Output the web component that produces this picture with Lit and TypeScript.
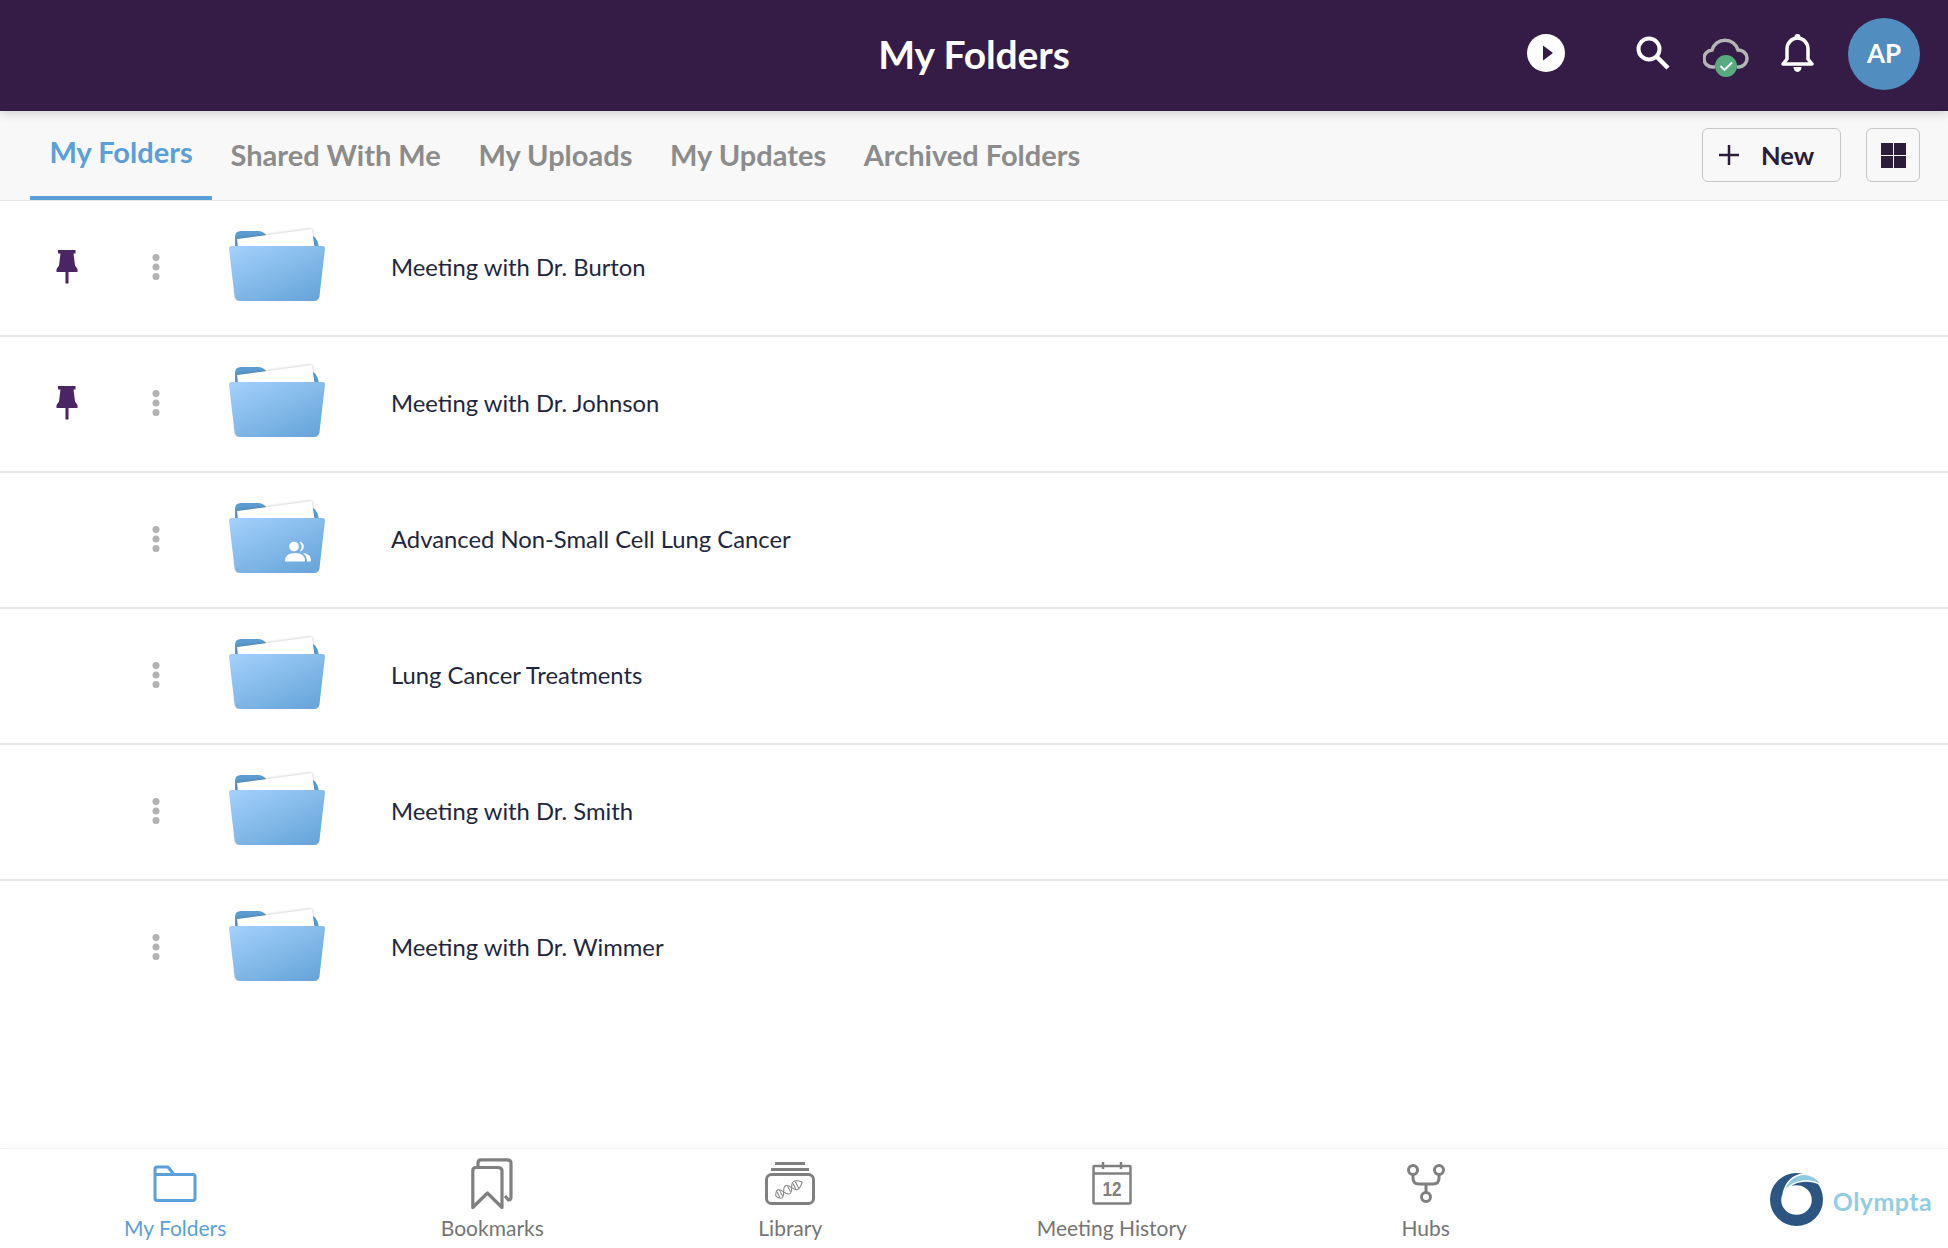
import { LitElement, html, css, svg } from "lit";
import { customElement } from "lit/decorators.js";

const folder = (shared: boolean) => html`<svg class="folder" width="100" height="78" viewBox="-2 -2 100 78">
  <defs>
    <linearGradient id="fg" x1="0.05" y1="0" x2="0.85" y2="1"><stop offset="0" stop-color="#a3d0fb"/><stop offset="1" stop-color="#67a5da"/></linearGradient>
    <filter id="ps" x="-20%" y="-30%" width="140%" height="160%"><feGaussianBlur stdDeviation="1.800"/></filter>
  </defs>
  <path d="M6 23V8Q6 2 12 2H29Q34 2 38 7L84 7Q90 10 90 23Z" fill="#5b9bd0"/>
  <path d="M8 10L83 0L85 18H9Z" fill="#000" opacity=".28" filter="url(#ps)"/>
  <path d="M8 10L83 0L85.500 18H9Z" fill="#fff"/>
  <path d="M2 17H94Q96 17 96 19.500L90.500 67Q90 72 85 72H11Q6 72 5.500 67L0 19.500Q0 17 2 17Z" fill="url(#fg)"/>
  ${shared ? svg`<g fill="#fff">
    <circle cx="65" cy="45.500" r="4.800"/><path d="M56 60Q56 52 66 52Q76 52 76 60Q76 60.500 75 60.500H57Q56 60.500 56 60Z"/>
    <path d="M71 41A4.800 4.800 0 0 1 71.500 50A6.500 6.500 0 0 0 71 41Z" stroke="#fff"/>
    <path d="M74 52Q82 53 82 59Q82 60.500 81 60.500H78Q78 55 74 52Z"/></g>` : ""}
</svg>`;

const pin = html`<svg width="22" height="34" viewBox="0 0 22 34"><path d="M2 0H19.500V3.500H17.500L19 15.500L21.500 19V22H12.500V33.500H9.500V22H0.500V19L3 15.500L4.500 3.500H2Z" fill="#4b2463"/></svg>`;
const dots = html`<svg width="8" height="26" viewBox="0 0 8 26"><g fill="#b3b3b3"><circle cx="4" cy="3.500" r="3.500"/><circle cx="4" cy="13" r="3.500"/><circle cx="4" cy="22.500" r="3.500"/></g></svg>`;

const rows = [
  { name: "Meeting with Dr. Burton", pinned: true },
  { name: "Meeting with Dr. Johnson", pinned: true },
  { name: "Advanced Non-Small Cell Lung Cancer", shared: true },
  { name: "Lung Cancer Treatments" },
  { name: "Meeting with Dr. Smith" },
  { name: "Meeting with Dr. Wimmer" },
];

const tabs = ["My Folders", "Shared With Me", "My Uploads", "My Updates", "Archived Folders"];

const navIcons = {
  folder: html`<svg width="44" height="37" viewBox="0 0 44 37" fill="none" stroke="#5ba0da" stroke-width="3" stroke-linejoin="round"><path d="M2 4Q2 2 4 2H15L21 9.500H40Q42 9.500 42 11.500V33Q42 35.500 40 35.500H4Q2 35.500 2 33Z"/><path d="M2 9.500H21"/></svg>`,
  bookmark: html`<svg width="42" height="51" viewBox="0 0 42 51" fill="none" stroke="#808080" stroke-width="3.200" stroke-linejoin="round"><path d="M7 9V5Q7 1.800 10 1.800H36Q40 1.800 40 5V39Q40 42 37.500 42L34 38"/><path d="M1.800 49.500V13Q1.800 9.500 5 9.500H27Q31 9.500 31 13V49.500L16.400 35Z"/></svg>`,
  library: html`<svg width="50" height="43" viewBox="0 0 50 43" fill="none" stroke="#808080"><path d="M10 1.500H40" stroke-width="3"/><path d="M6 7.500H44" stroke-width="3"/><rect x="1.500" y="12.500" width="47" height="29" rx="5" stroke-width="3"/><g stroke-width="1" transform="rotate(-28 24 27)"><path d="M9 27C12 21 15 21 18 27S24 33 27 27S33 21 39 27"/><path d="M9 27C12 33 15 33 18 27S24 21 27 27S33 33 39 27"/><path d="M12 24V30M15 23.500V30.500M24 24V30M30 24V30M33 23.500V30.500"/></g></svg>`,
  calendar: html`<svg width="40" height="44" viewBox="0 0 40 44" fill="none" stroke="#808080" stroke-width="2.500"><rect x="1.500" y="5" width="37" height="37.500" rx="1"/><path d="M1.500 12.500H38.500" /><path d="M11 1V8M29 1V8"/><text x="20" y="35" text-anchor="middle" class="cal" textLength="19" lengthAdjust="spacingAndGlyphs">12</text></svg>`,
  hubs: html`<svg width="40" height="39" viewBox="0 0 40 39" fill="none" stroke="#808080" stroke-width="3"><circle cx="7" cy="6" r="4.500"/><circle cx="33" cy="6" r="4.500"/><circle cx="20" cy="33" r="4.500"/><path d="M7 10.500V14Q7 20 13 20H27Q33 20 33 14V10.500M20 20V28.500"/></svg>`,
};

const nav = [
  { label: "My Folders", icon: navIcons.folder, active: true },
  { label: "Bookmarks", icon: navIcons.bookmark },
  { label: "Library", icon: navIcons.library },
  { label: "Meeting History", icon: navIcons.calendar },
  { label: "Hubs", icon: navIcons.hubs },
];

@customElement("app-root")
export class AppRoot extends LitElement {
  static styles = css`
    :host { display: flex; flex-direction: column; height: 1248px; overflow: hidden; background: #fff; font-family: Lato, "Noto Sans", sans-serif; }
    .header { flex: none; height: 111px; box-sizing: border-box; padding: 0 28px; background: #351c47; display: flex; align-items: center; box-shadow: 0 2px 10px rgba(0,0,0,.18); position: relative; z-index: 2; }
    .side { flex: 1 1 0; }
    .title { color: #fff; font-size: 39px; font-weight: 700; letter-spacing: -0.1px; padding-bottom: 3px; }
    .hicons { display: flex; justify-content: flex-end; align-items: center; height: 108px; margin-bottom: 3px; }
    .hicons svg { display: block; }
    .play { margin-right: 71px; margin-bottom: 2px; }
    .search { margin-right: 33px; margin-bottom: 3px; }
    .cloud { margin-right: 32px; margin-top: 6px; }
    .bell { margin-right: 34px; margin-bottom: 2px; }
    .avatar { width: 72px; height: 72px; border-radius: 50%; background: #528dbf; color: #fff; font-weight: 700; font-size: 26px; display: flex; align-items: center; justify-content: center; padding-bottom: 2px; box-sizing: border-box; }
    .tabs { flex: none; height: 90px; box-sizing: border-box; background: #f8f8f8; border-bottom: 1px solid #e6e6e6; display: flex; align-items: stretch; padding: 0 28px 0 30px; }
    .tab { padding: 1px 18.800px 0; box-sizing: border-box; font-size: 29px; font-weight: 700; color: #8c8c8c; display: flex; align-items: center; border-bottom: 4px solid transparent; }
    .tab.active { color: #5b9fd8; border-bottom-color: #5b9fd8; padding: 0 19px 4px 19.500px; }
    .spacer { flex: 1; }
    .actions { display: flex; align-items: center; gap: 25px; padding-bottom: 1px; }
    .btn { height: 54px; box-sizing: border-box; border: 1.500px solid #c6c6c6; border-radius: 6px; background: #f8f8f8; display: flex; align-items: center; justify-content: center; color: #2b1c3b; }
    .new { width: 139px; font-size: 25.500px; font-weight: 700; gap: 22px; justify-content: flex-start; padding-left: 16px; }
    .grid { width: 54px; }
    .list { flex: 1; }
    .row { height: 136px; box-sizing: border-box; border-bottom: 2px solid #e4e4e4; display: flex; align-items: center; }
    .row:last-child { border-bottom-color: transparent; }
    .row svg { display: block; }
    .pin { width: 67px; padding-left: 56px; box-sizing: content-box; height: 34px; flex: none; margin-top: -3px; }
    .more { width: 8px; margin-left: 29px; flex: none; margin-top: -2px; }
    .folder { margin-left: 67px; flex: none; margin-top: -4px; }
    .name { margin-left: 64px; font-size: 23.800px; color: #1f2740; margin-top: -2px; }
    .nav { flex: none; height: 100px; box-sizing: border-box; border-top: 1px solid #f2f2f2; box-shadow: 0 -4px 6px rgba(0,0,0,.02); display: flex; padding-left: 124px; gap: 214.500px; position: relative; }
    .item { height: 99px; display: flex; flex-direction: column; align-items: center; font-size: 21px; color: #757575; }
    .item.active { color: #5ba0da; }
    .ico { height: 63px; display: flex; align-items: center; justify-content: center; padding-top: 5px; box-sizing: border-box; }
    .ico svg { display: block; }
    .cal { font: 700 20px "Liberation Sans", sans-serif; fill: #808080; stroke: none; }
    .label { line-height: 26px; margin-top: 3px; white-space: nowrap; }
    .logo { margin-left: auto; margin-right: 16px; display: flex; align-items: center; gap: 10px; align-self: center; margin-top: 2px; }
    .logo svg { display: block; }
    .logot { font-size: 25px; font-weight: 700; color: #93cde2; letter-spacing: 0.4px; padding-top: 2px; }
  `;

  render() {
    return html`
      <div class="header">
        <div class="side"></div>
        <div class="title">My Folders</div>
        <div class="side hicons">
          <svg class="play" width="38" height="38" viewBox="0 0 38 38"><circle cx="19" cy="19" r="19" fill="#fff"/><path d="M16 11.500L26 19L16 26.500Z" fill="#351c47"/></svg>
          <svg class="search" width="34" height="34" viewBox="0 0 34 34" fill="none" stroke="#fff"><circle cx="13" cy="13" r="10.500" stroke-width="4"/><path d="M20.500 20.500L32 32" stroke-width="4.500"/></svg>
          <svg class="cloud" width="46" height="41" viewBox="0 0 46 41" fill="none"><path d="M12 30H10A8.500 8.500 0 0 1 9 13A13.500 13.500 0 0 1 35 13A8.500 8.500 0 0 1 36 30H34" stroke="#b5b5b5" stroke-width="3.500"/><circle cx="23" cy="29" r="11" fill="#58ab7f"/><path d="M17.500 29L21.500 33L29 25.500" stroke="#fff" stroke-width="1.800"/></svg>
          <svg class="bell" width="33" height="38" viewBox="0 0 33 38" fill="none"><circle cx="16.500" cy="3" r="3" fill="#fff"/><path d="M2 30L6 25V15A10.500 11 0 0 1 27 15V25L31 30Z" stroke="#fff" stroke-width="3.500" stroke-linejoin="round"/><path d="M12.500 33H20.500A4 5 0 0 1 12.500 33Z" fill="#fff"/></svg>
          <div class="avatar">AP</div>
        </div>
      </div>
      <div class="tabs">
        ${tabs.map((t, i) => html`<div class="tab ${i === 0 ? "active" : ""}">${t}</div>`)}
        <div class="spacer"></div>
        <div class="actions">
          <div class="btn new"><svg width="20" height="20" viewBox="0 0 20 20"><path d="M10 0V20M0 10H20" stroke="#2b1c3b" stroke-width="2.500"/></svg><span>New</span></div>
          <div class="btn grid"><svg width="25" height="25" viewBox="0 0 25 25" fill="#2b1c3b"><rect width="12" height="12"/><rect x="13" width="12" height="12"/><rect y="13" width="12" height="12"/><rect x="13" y="13" width="12" height="12"/></svg></div>
        </div>
      </div>
      <div class="list">
        ${rows.map((r) => html`<div class="row">
          <div class="pin">${r.pinned ? pin : ""}</div>
          <div class="more">${dots}</div>
          ${folder(!!r.shared)}
          <div class="name">${r.name}</div>
        </div>`)}
      </div>
      <div class="nav">
        ${nav.map((n) => html`<div class="item ${n.active ? "active" : ""}"><div class="ico">${n.icon}</div><div class="label">${n.label}</div></div>`)}
        <div class="logo">
          <svg width="53" height="53" viewBox="0 0 52 52"><path fill-rule="evenodd" d="M26 0A26 26 0 1 1 26 52A26 26 0 1 1 26 0ZM26 12A15 14.500 0 1 0 26 41A15 14.500 0 0 0 26 12Z" fill="#2c5582"/><path d="M13 20Q17 3 33 1Q45 2 51 12Q42 7 32 8Q20 9 13 20Z" fill="#8ecae0" stroke="#fff" stroke-width="1.500"/></svg>
          <span class="logot">Olympta</span>
        </div>
      </div>
    `;
  }
}
